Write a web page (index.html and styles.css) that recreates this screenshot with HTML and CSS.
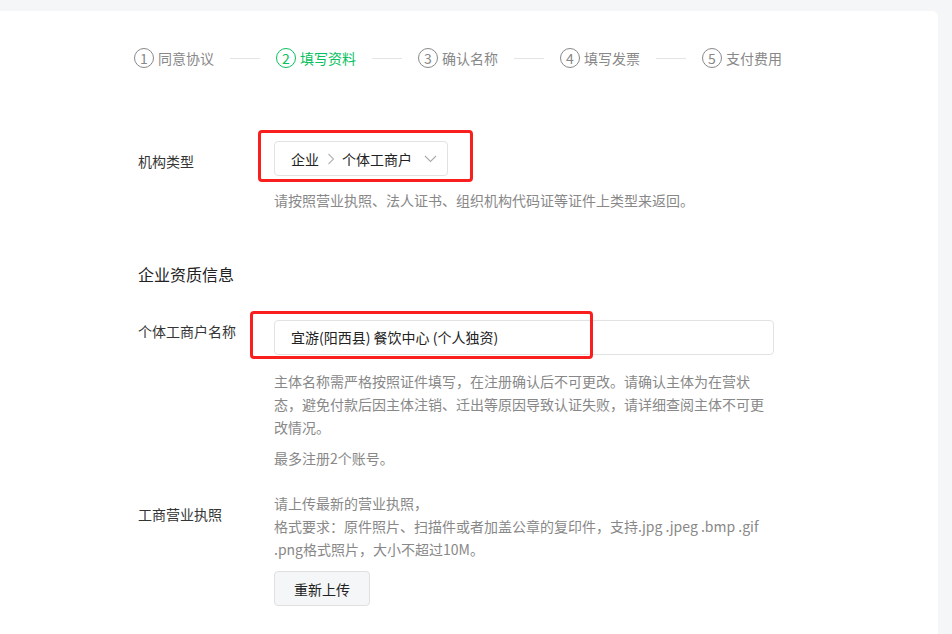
FILE: index.html
```html
<!DOCTYPE html>
<html>
    <head>
        <meta charset="utf-8">
        <link rel="stylesheet" href="styles.css">
    </head>
    <body>
        <div class="card">
            <div class="steps">
                <div class="step"><span class="step-num">1</span>同意协议</div>
                <span class="step-line"></span>
                <div class="step step-active"><span class="step-num">2</span>填写资料</div>
                <span class="step-line"></span>
                <div class="step"><span class="step-num">3</span>确认名称</div>
                <span class="step-line"></span>
                <div class="step"><span class="step-num">4</span>填写发票</div>
                <span class="step-line"></span>
                <div class="step"><span class="step-num">5</span>支付费用</div>
            </div>

            <div class="form-row row-type">
                <label class="form-label label-center">机构类型</label>
                <div class="form-control">
                    <div class="mark-wrap">
                        <div class="select">
                            <span>企业</span>
                            <svg class="sep" width="8" height="12" viewBox="0 0 8 12"><path d="M1.5 1 L6.5 6 L1.5 11" fill="none" stroke="#b5b5b5" stroke-width="1.1"/></svg>
                            <span>个体工商户</span>
                            <svg class="arrow" width="13" height="8" viewBox="0 0 13 8"><path d="M1 1 L6.5 6.5 L12 1" fill="none" stroke="#aaa" stroke-width="1.1"/></svg>
                        </div>
                        <span class="mark mark-type"></span>
                    </div>
                    <p class="hint hint-type">请按照营业执照、法人证书、组织机构代码证等证件上类型来返回。</p>
                </div>
            </div>

            <h3 class="section-title">企业资质信息</h3>

            <div class="form-row">
                <label class="form-label">个体工商户名称</label>
                <div class="form-control">
                    <div class="mark-wrap">
                        <div class="input">宜游(阳西县) 餐饮中心 (个人独资)</div>
                        <span class="mark mark-name"></span>
                    </div>
                    <p class="hint hint-name">主体名称需严格按照证件填写，在注册确认后不可更改。请确认主体为在营状态，避免付款后因主体注销、迁出等原因导致认证失败，请详细查阅主体不可更改情况。</p>
                    <p class="hint hint-count">最多注册2个账号。</p>
                </div>
            </div>

            <div class="form-row row-upload">
                <label class="form-label label-upload">工商营业执照</label>
                <div class="form-control">
                    <p class="hint">请上传最新的营业执照，<br>格式要求：原件照片、扫描件或者加盖公章的复印件，支持.jpg .jpeg .bmp .gif .png格式照片，大小不超过10M。</p>
                    <button class="btn">重新上传</button>
                </div>
            </div>
        </div>
    </body>
</html>
```

FILE: styles.css
```css
body {
    margin: 0;
    background-color: #f5f6f7;
    font-family: "Noto Sans CJK SC", "Noto Sans", sans-serif;
    font-size: 14px;
    color: #353535;
    overflow: hidden;
}

.card {
    background-color: #fff;
    margin: 11px 14px 0 -8px;
    padding: 36px 0 40px 146px;
    border-radius: 6px;
    height: 640px;
    box-sizing: border-box;
}

.steps {
    display: flex;
    align-items: center;
    height: 22px;
    line-height: 22px;
    color: #888;
    margin-left: -4px;
}

.step {
    display: flex;
    align-items: center;
}

.step-num {
    width: 18px;
    height: 18px;
    border: 1px solid #888;
    border-radius: 50%;
    display: inline-flex;
    align-items: center;
    justify-content: center;
    margin-right: 4px;
    font-size: 14px;
    line-height: 1;
}

.step-active {
    color: #07c160;
}

.step-active .step-num {
    border-color: #07c160;
}

.step-line {
    width: 30px;
    height: 1px;
    background-color: #e4e4e4;
    margin: 0 16px;
}

.form-row {
    display: flex;
}

.form-label {
    width: 136px;
    flex-shrink: 0;
    line-height: 22px;
}

.label-center {
    padding-top: 9px;
}

.label-upload {
    padding-top: 11px;
}

.form-control {
    flex: 1;
}

.row-type {
    margin-top: 72px;
}

.mark-wrap {
    position: relative;
}

.mark {
    position: absolute;
    border: 3px solid #fa1f1f;
    border-radius: 4px;
    pointer-events: none;
}

.mark-type {
    left: -16px;
    top: -11px;
    width: 209px;
    height: 46px;
}

.mark-name {
    left: -24px;
    top: -9px;
    width: 337px;
    height: 42px;
}

.select {
    display: inline-flex;
    align-items: center;
    box-sizing: border-box;
    width: 174px;
    height: 35px;
    padding: 0 10px 0 16px;
    border: 1px solid #e2e2e2;
    border-radius: 4px;
    color: #222;
}

.select .sep {
    margin: 0 7px 0 8px;
}

.select .arrow {
    margin-left: auto;
}

.input {
    box-sizing: border-box;
    width: 500px;
    height: 35px;
    line-height: 33px;
    padding: 0 16px;
    border: 1px solid #e2e2e2;
    border-radius: 4px;
    color: #222;
}

.hint {
    margin: 0;
    color: #888;
    line-height: 23px;
    width: 500px;
}

.hint-type {
    margin-top: 13px;
}

.section-title {
    font-size: 16px;
    font-weight: normal;
    line-height: 24px;
    margin: 50px 0 34px 0;
    color: #222;
}

.hint-name {
    margin-top: 15px;
    width: 492px;
}

.hint-count {
    margin-top: 8px;
}

.row-upload {
    margin-top: 22px;
}

.btn {
    margin-top: 10px;
    width: 96px;
    height: 35px;
    background-color: #f5f6f7;
    border: 1px solid #e0e0e0;
    border-radius: 4px;
    font-family: inherit;
    font-size: 14px;
    color: #222;
}
```
